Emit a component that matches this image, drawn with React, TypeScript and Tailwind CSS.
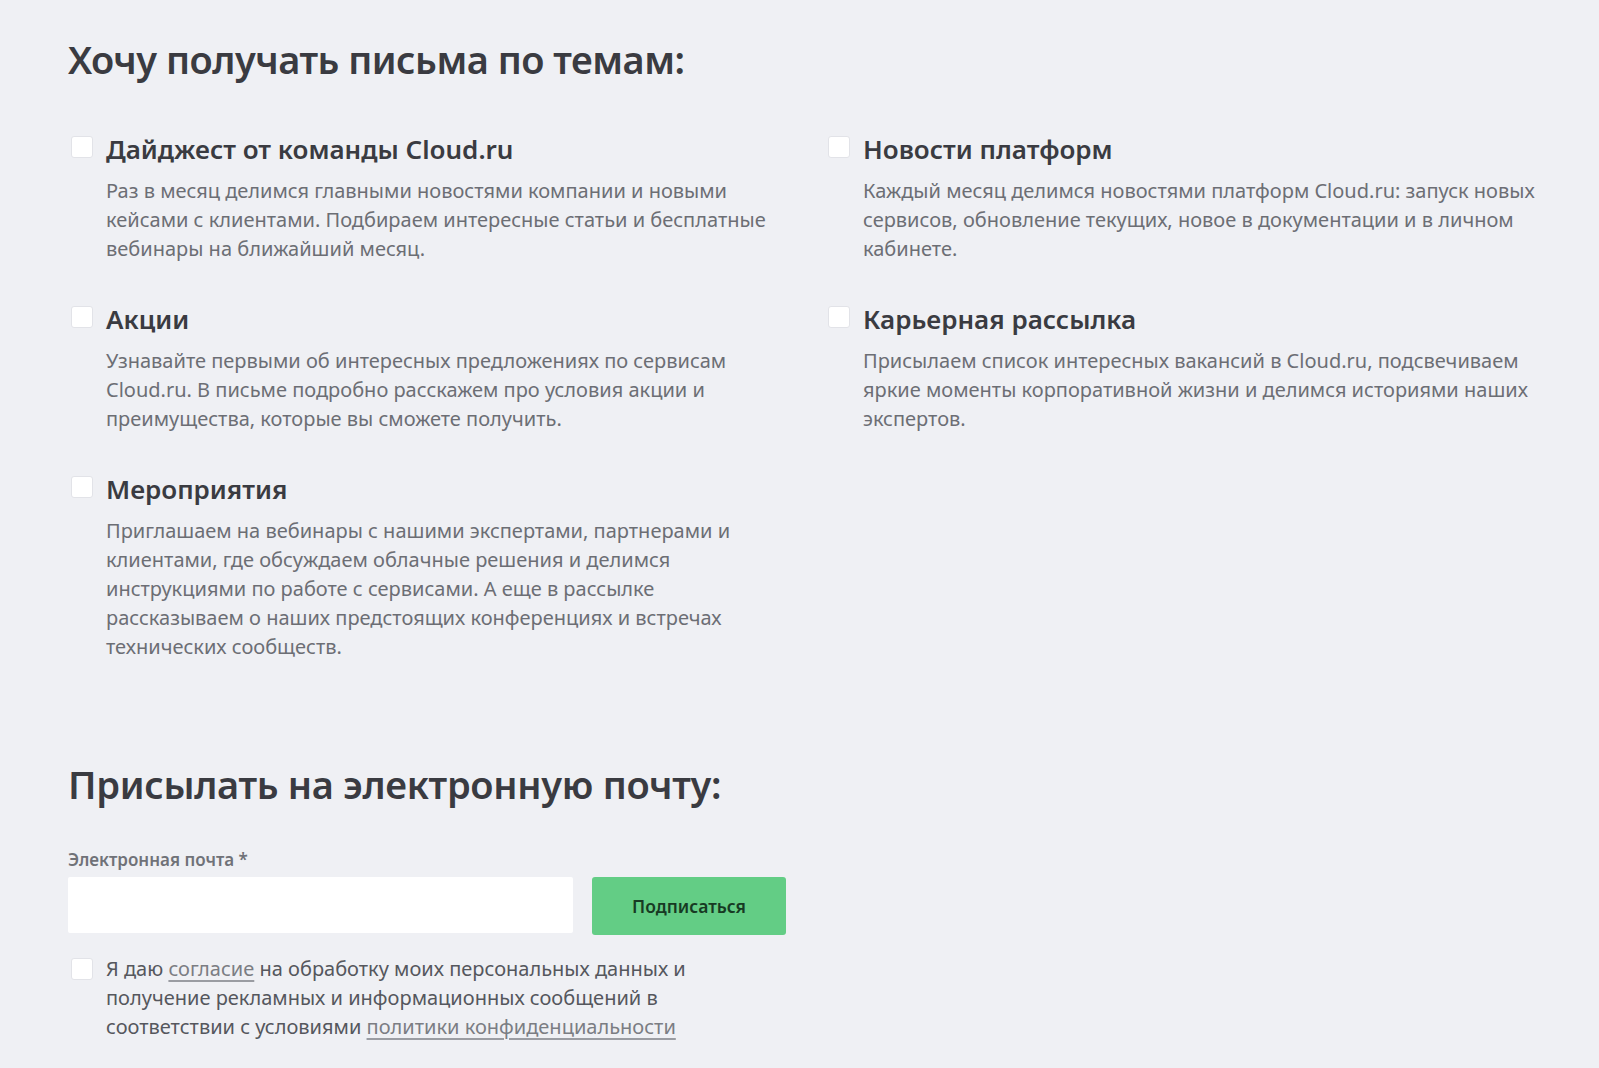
import React from 'react';

interface Topic {
  title: string;
  text: string;
}

// Laid out row by row so both columns share the same row heights
const topics: Topic[] = [
  {
    title: 'Дайджест от команды Cloud.ru',
    text: 'Раз в месяц делимся главными новостями компании и новыми кейсами с клиентами. Подбираем интересные статьи и бесплатные вебинары на ближайший месяц.',
  },
  {
    title: 'Новости платформ',
    text: 'Каждый месяц делимся новостями платформ Cloud.ru: запуск новых сервисов, обновление текущих, новое в документации и в личном кабинете.',
  },
  {
    title: 'Акции',
    text: 'Узнавайте первыми об интересных предложениях по сервисам Cloud.ru. В письме подробно расскажем про условия акции и преимущества, которые вы сможете получить.',
  },
  {
    title: 'Карьерная рассылка',
    text: 'Присылаем список интересных вакансий в Cloud.ru, подсвечиваем яркие моменты корпоративной жизни и делимся историями наших экспертов.',
  },
  {
    title: 'Мероприятия',
    text: 'Приглашаем на вебинары с нашими экспертами, партнерами и клиентами, где обсуждаем облачные решения и делимся инструкциями по работе с сервисами. А еще в рассылке рассказываем о наших предстоящих конференциях и встречах технических сообществ.',
  },
];

function Box({ className = 'mt-[2px]' }: { className?: string }) {
  return (
    <span className={`${className} block h-[22px] w-[22px] shrink-0 rounded-[3px] border border-[#e2e3e8] bg-white`} />
  );
}

function TopicItem({ topic }: { topic: Topic }) {
  return (
    <label className="flex gap-[13px] cursor-pointer">
      <Box />
      <div className="w-[688px]">
        <div className="text-[26px] leading-[30px] font-semibold text-[#3a3b41]">{topic.title}</div>
        <p className="mt-[12px] text-[20px] leading-[29px] text-[#6c6e74]">{topic.text}</p>
      </div>
    </label>
  );
}

export default function App() {
  return (
    <div className="min-h-screen bg-[#eff0f4] pl-[68px] pt-[33px] font-['Noto_Sans',sans-serif]">
      <h1 className="text-[38px] leading-[52px] font-semibold tracking-[-0.5px] text-[#3a3b41]">
        Хочу получать письма по темам:
      </h1>

      <div className="mt-[49px] grid grid-cols-[757px_757px] gap-y-[41px] pl-[3px]">
        {topics.map((t) => (
          <TopicItem key={t.title} topic={t} />
        ))}
      </div>

      <h2 className="mt-[97px] text-[38px] leading-[52px] font-semibold tracking-[-0.3px] text-[#3a3b41]">
        Присылать на электронную почту:
      </h2>

      <div className="mt-[40px] text-[17px] leading-[20px] font-semibold text-[#707278]">Электронная почта *</div>
      <div className="mt-[7px] flex gap-[19px]">
        <input
          type="email"
          className="h-[56px] w-[505px] rounded-[2px] bg-white px-4 text-[18px] outline-none"
        />
        <button className="h-[58px] w-[194px] rounded-[3px] bg-[#63cd85] text-[17.5px] font-semibold text-[#173a23]">
          Подписаться
        </button>
      </div>

      <label className="mt-[19px] flex gap-[13px] pl-[3px] cursor-pointer">
        <Box className="mt-[4px]" />
        <p className="w-[640px] text-[20px] leading-[29px] text-[#55575d]">
          Я даю <a className="text-[#7b7d83] underline decoration-[#9a9ca2] underline-offset-4">согласие</a> на
          обработку моих персональных данных и получение рекламных и информационных сообщений в соответствии с
          условиями{' '}
          <a className="text-[#7b7d83] underline decoration-[#9a9ca2] underline-offset-4">политики конфиденциальности</a>
        </p>
      </label>
    </div>
  );
}
